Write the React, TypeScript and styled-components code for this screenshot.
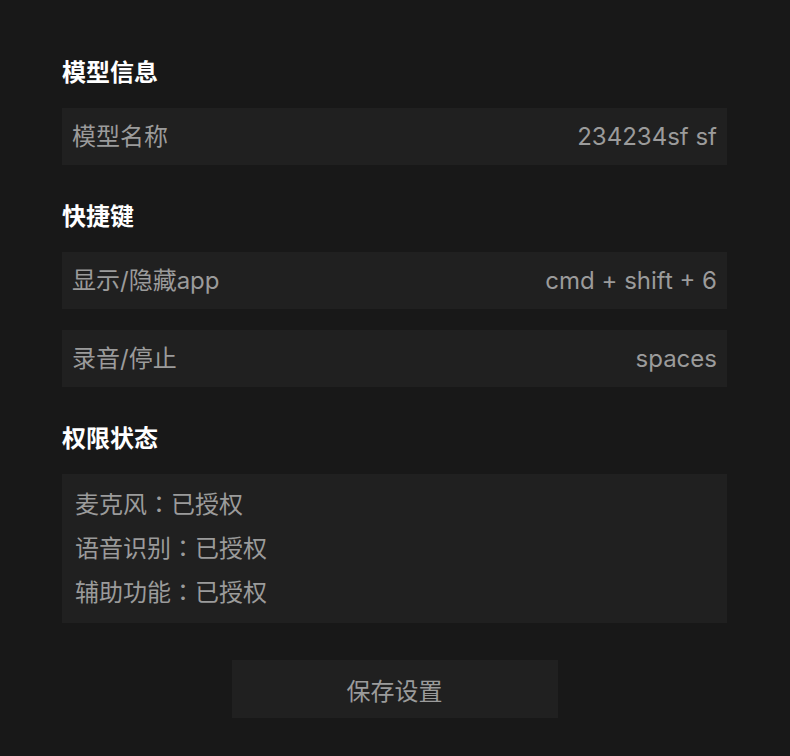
import React from 'react'
import styled, { createGlobalStyle } from 'styled-components'

const GlobalStyle = createGlobalStyle`
  html, body {
    margin: 0;
    padding: 0;
    background: #181818;
  }
  body {
    font-family: Inter, "Noto Sans CJK SC", sans-serif;
  }
`

const Page = styled.div`
  width: 665px;
  padding: 56px 62px 38px;
  display: flex;
  flex-direction: column;
`

const Section = styled.section`
  display: flex;
  flex-direction: column;
  gap: 18px;
  margin-bottom: 35px;
`

const Heading = styled.h2`
  margin: 0;
  font-size: 24px;
  line-height: 34px;
  font-weight: 700;
  color: #ffffff;
`

const List = styled.div`
  display: flex;
  flex-direction: column;
  gap: 21px;
`

const Row = styled.div`
  height: 57px;
  display: flex;
  align-items: center;
  justify-content: space-between;
  padding: 0 10px 0 10px;
  background: #202020;
  color: #9b9b9b;
  font-size: 24px;
  line-height: 32px;
`

const StatusBox = styled.div`
  background: #202020;
  padding: 9px 13px 8px;
  display: flex;
  flex-direction: column;
`

const StatusLine = styled.div`
  font-size: 24px;
  line-height: 44px;
  color: #9b9b9b;
`

// centred full-width colon, like the reference
const Colon = styled.span`
  font-family: "Noto Sans CJK TC", sans-serif;
  line-height: 0;
`

const SaveButton = styled.button`
  align-self: center;
  margin-top: 2px;
  width: 326px;
  height: 58px;
  border: none;
  background: #202020;
  color: #9b9b9b;
  font-family: Inter, "Noto Sans CJK SC", sans-serif;
  font-size: 24px;
  cursor: pointer;
`

const shortcuts = [
  { label: '显示/隐藏app', value: 'cmd + shift + 6' },
  { label: '录音/停止', value: 'spaces' },
]

const permissions = [
  { name: '麦克风', status: '已授权' },
  { name: '语音识别', status: '已授权' },
  { name: '辅助功能', status: '已授权' },
]

const App = () => {
  return (
    <>
      <GlobalStyle />
      <Page>
        <Section>
          <Heading>模型信息</Heading>
          <Row>
            <span>模型名称</span>
            <span>234234sf sf</span>
          </Row>
        </Section>
        <Section>
          <Heading>快捷键</Heading>
          <List>
            {shortcuts.map((s) => (
              <Row key={s.label}>
                <span>{s.label}</span>
                <span>{s.value}</span>
              </Row>
            ))}
          </List>
        </Section>
        <Section>
          <Heading>权限状态</Heading>
          <StatusBox>
            {permissions.map((p) => (
              <StatusLine key={p.name}>
                {p.name}
                <Colon>：</Colon>
                {p.status}
              </StatusLine>
            ))}
          </StatusBox>
        </Section>
        <SaveButton>保存设置</SaveButton>
      </Page>
    </>
  )
}

export default App
